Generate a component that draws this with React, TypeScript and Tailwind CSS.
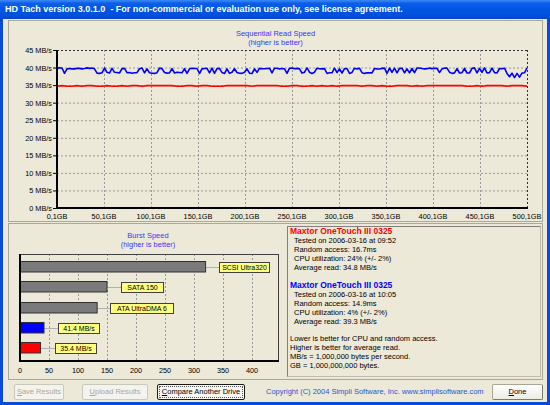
import React from "react";

const font = "font-['Liberation_Sans','Arial',sans-serif]";

// sequential read chart geometry (svg coords)
const X0 = 48;
const X1 = 518;
const Y_TOP = 3;
const Y_BOT = 161;
const yOf = (mb: number) => Y_BOT - (mb * (Y_BOT - Y_TOP)) / 45;
const xOf = (gb: number) => X0 + (gb * (X1 - X0)) / 500;

let seed = 4590;
const rnd = () => {
  seed = (seed * 9301 + 49297) % 233280;
  return seed / 233280;
};

const bluePoints: string[] = [];
for (let x = X0; x <= X1; x += 2.5) {
  let mb = 39.9 - rnd() * 0.3;
  if (rnd() < 0.42) mb = 38.7 - rnd() * 0.4;
  if (x > 500 && rnd() < 0.5) mb = 37.6 - rnd() * 0.6;
  bluePoints.push(`${x.toFixed(1)},${yOf(mb).toFixed(1)}`);
}

const redPoints: string[] = [];
for (let x = X0; x <= X1; x += 5) {
  const mb = 34.85 - (rnd() < 0.3 ? 0.2 : 0);
  redPoints.push(`${x},${yOf(mb).toFixed(1)}`);
}

const SequentialChart = () => (
  <svg width={533} height={174} className="block">
    {/* horizontal grid */}
    {[5, 10, 15, 20, 25, 30, 35, 40].map((mb) => (
      <line
        key={mb}
        x1={X0}
        x2={X1}
        y1={yOf(mb) + 0.5}
        y2={yOf(mb) + 0.5}
        stroke="#9a9a9a"
        strokeDasharray="2 2"
      />
    ))}
    {/* vertical grid */}
    {[50, 100, 150, 200, 250, 300, 350, 400, 450].map((gb) => (
      <line
        key={gb}
        x1={xOf(gb) + 0.5}
        x2={xOf(gb) + 0.5}
        y1={Y_TOP}
        y2={Y_BOT}
        stroke="#9a9a9a"
        strokeDasharray="2 2"
      />
    ))}
    <line x1={X0} x2={X1} y1={Y_TOP + 0.5} y2={Y_TOP + 0.5} stroke="#303030" strokeDasharray="2 2" />
    <line x1={X1 + 0.5} x2={X1 + 0.5} y1={Y_TOP} y2={Y_BOT} stroke="#303030" strokeDasharray="2 2" />
    {/* y labels + ticks */}
    {[0, 5, 10, 15, 20, 25, 30, 35, 40, 45].map((mb) => (
      <g key={mb}>
        <line x1={44} x2={X0} y1={yOf(mb) + 0.5} y2={yOf(mb) + 0.5} stroke="#000" />
        <text
          x={43}
          y={yOf(mb) + 3}
          textAnchor="end"
          fontSize="7.3"
          fontFamily="Liberation Sans, Arial, sans-serif"
          fill="#000"
        >
          {mb} MB/s
        </text>
      </g>
    ))}
    {/* x labels */}
    {[0, 50, 100, 150, 200, 250, 300, 350, 400, 450, 500].map((gb) => (
      <text
        key={gb}
        x={xOf(gb)}
        y={171.5}
        textAnchor="middle"
        fontSize="7.3"
        fontFamily="Liberation Sans, Arial, sans-serif"
        fill="#000"
      >
        {gb},1GB
      </text>
    ))}
    <polyline points={redPoints.join(" ")} fill="none" stroke="#ff0000" strokeWidth={1.6} />
    <polyline points={bluePoints.join(" ")} fill="none" stroke="#0000ff" strokeWidth={1.6} strokeLinejoin="round" />
    {/* axes */}
    <line x1={X0} x2={X0} y1={Y_TOP} y2={Y_BOT + 1} stroke="#000" strokeWidth={2} />
    <line x1={X0 - 1} x2={X1 + 1} y1={Y_BOT} y2={Y_BOT} stroke="#000" strokeWidth={2} />
  </svg>
);

// burst chart geometry
const B0 = 11;
const B1 = 269;
const B_TOP = 5;
const B_BOT = 112;
const bx = (mb: number) => B0 + mb * 0.58;

type Bar = { value: number; y: number; fill: string; label: string; lx: number; lw: number };

const bars: Bar[] = [
  { value: 320, y: 12, fill: "#7a7a7a", label: "SCSI Ultra320", lx: 210, lw: 50 },
  { value: 150, y: 32, fill: "#7a7a7a", label: "SATA 150", lx: 112, lw: 42 },
  { value: 133, y: 53, fill: "#7a7a7a", label: "ATA UltraDMA 6", lx: 101, lw: 63 },
  { value: 41.4, y: 73, fill: "#0000ff", label: "41.4 MB/s", lx: 49, lw: 41 },
  { value: 35.4, y: 93, fill: "#ff0000", label: "35.4 MB/s", lx: 46, lw: 41 },
];

const BurstChart = () => (
  <svg width={278} height={130} className="block">
    {[50, 100, 150, 200, 250, 300, 350, 400].map((mb) => (
      <line
        key={mb}
        x1={bx(mb) + 0.5}
        x2={bx(mb) + 0.5}
        y1={B_TOP}
        y2={B_BOT}
        stroke="#9a9a9a"
        strokeDasharray="2 2"
      />
    ))}
    <line x1={B0} x2={B1} y1={B_TOP + 0.5} y2={B_TOP + 0.5} stroke="#404040" />
    <line x1={B1 + 0.5} x2={B1 + 0.5} y1={B_TOP} y2={B_BOT} stroke="#404040" />
    {bars.map((b) => (
      <g key={b.label}>
        <line
          x1={bx(b.value)}
          x2={b.lx}
          y1={b.y + 6.5}
          y2={b.y + 6.5}
          stroke="#b0b0b0"
        />
        <rect
          x={B0}
          y={b.y + 0.5}
          width={bx(b.value) - B0}
          height={10.5}
          fill={b.fill}
          stroke="#303030"
          strokeWidth={1}
        />
        <rect x={b.lx + 0.5} y={b.y + 1.5} width={b.lw} height={10} fill="#ffff80" stroke="#404040" />
        <text
          x={b.lx + 0.5 + b.lw / 2}
          y={b.y + 9.2}
          textAnchor="middle"
          fontSize="7"
          fontFamily="Liberation Sans, Arial, sans-serif"
          fill="#000"
        >
          {b.label}
        </text>
      </g>
    ))}
    <line x1={B0} x2={B0} y1={B_TOP} y2={B_BOT + 1} stroke="#000" strokeWidth={2} />
    <line x1={B0 - 1} x2={B1 + 1} y1={B_BOT} y2={B_BOT} stroke="#000" strokeWidth={2} />
    {[0, 50, 100, 150, 200, 250, 300, 350, 400].map((mb) => (
      <text
        key={mb}
        x={bx(mb)}
        y={123.5}
        textAnchor="middle"
        fontSize="7.3"
        fontFamily="Liberation Sans, Arial, sans-serif"
        fill="#000"
      >
        {mb}
      </text>
    ))}
  </svg>
);

type DriveResult = {
  color: string;
  tested: string;
  random: string;
  cpu: string;
  average: string;
};

const results: DriveResult[] = [
  { color: "text-[#ff0000]", tested: "2006-03-16 at 09:52", random: "16.7ms", cpu: "24% (+/- 2%)", average: "34.8 MB/s" },
  { color: "text-[#0000ff]", tested: "2006-03-16 at 10:05", random: "14.9ms", cpu: "4% (+/- 2%)", average: "39.3 MB/s" },
];

const XpButton = ({
  children,
  width,
  disabled,
  focused,
}: {
  children: React.ReactNode;
  width: string;
  disabled?: boolean;
  focused?: boolean;
}) => {
  if (disabled) {
    return (
      <div className={`${width} h-[16px] flex items-center justify-center rounded-[2px] border border-[#cac8bb] bg-[#f4f3ee] text-[#aca899] text-[7.5px]`}>
        {children}
      </div>
    );
  }
  if (focused) {
    return (
      <div className={`${width} h-[16px] flex items-center justify-center rounded-[2px] border border-[#1a1a1a] bg-[#f7f6f1] p-[1px]`}>
        <div className="w-full h-full flex items-center justify-center border border-dotted border-[#555] text-[7.5px] text-black">
          {children}
        </div>
      </div>
    );
  }
  return (
    <div className={`${width} h-[16px] flex items-center justify-center rounded-[2px] border border-[#a9a696] border-r-[#7d7a6d] border-b-[#7d7a6d] bg-[linear-gradient(to_bottom,#ffffff,#ecebe4)] text-[7.5px] text-black`}>
      {children}
    </div>
  );
};

export default function App() {
  return (
    <div className={`w-[550px] h-[405px] bg-[#0b4ad8] flex flex-col overflow-hidden ${font}`}>
      <div className="h-[19px] shrink-0 flex items-center pl-[5px] bg-[linear-gradient(to_bottom,#3d8af5_0%,#0a5ee9_18%,#0054e3_55%,#004fd8_85%,#0a45c4_100%)]">
        <span className="text-white font-bold text-[9px] leading-none whitespace-nowrap">
          HD Tach version 3.0.1.0&nbsp;&nbsp;- For non-commercial or evaluation use only, see license agreement.
        </span>
      </div>

      <div className="flex-1 mx-[3px] mb-[3px] bg-[#ece9d8] flex flex-col pl-[5px] pr-[4px] pt-[1px]">
        {/* sequential read panel */}
        <div className="h-[202px] shrink-0 border border-[#aca899] flex flex-col">
          <div className="pt-[8px] flex flex-col items-center text-[7.5px] leading-[9px] text-[#3838f8]">
            <span>Sequential Read Speed</span>
            <span>(higher is better)</span>
          </div>
          <SequentialChart />
        </div>

        {/* burst + results panel */}
        <div className="h-[157px] mt-[1px] shrink-0 border border-[#aca899] flex">
          <div className="w-[278px] shrink-0 flex flex-col pt-[7px]">
            <div className="flex flex-col items-center text-[7.5px] leading-[9px] text-[#3838f8]">
              <span>Burst Speed</span>
              <span>(higher is better)</span>
            </div>
            <BurstChart />
          </div>
          <div className="flex-1 mt-[2px] mb-[2px] mr-[1px] border border-[#c0bdb0] border-l-[#808080] border-t-[#808080] pl-[2px] text-[7.5px] leading-[9px] text-black">
            {results.map((r, i) => (
              <div key={i} className="mb-[8.5px]">
                <div className={`${r.color} font-bold text-[8.5px] leading-[9px]`}>Maxtor OneTouch III 0325</div>
                <div className="pl-[4px]">
                  <div>Tested on {r.tested}</div>
                  <div>Random access: {r.random}</div>
                  <div>CPU utilization: {r.cpu}</div>
                  <div>Average read: {r.average}</div>
                </div>
              </div>
            ))}
            <div>
              <div>Lower is better for CPU and random access.</div>
              <div>Higher is better for average read.</div>
              <div>MB/s = 1,000,000 bytes per second.</div>
              <div>GB = 1,000,000,000 bytes.</div>
            </div>
          </div>
        </div>

        {/* buttons */}
        <div className="h-[16px] mt-[4px] shrink-0 flex items-center pl-[6px]">
          <XpButton width="w-[50px]" disabled>
            <span><span className="underline">S</span>ave Results</span>
          </XpButton>
          <div className="ml-[18px]">
            <XpButton width="w-[66px]" disabled>
              <span><span className="underline">U</span>pload Results</span>
            </XpButton>
          </div>
          <div className="ml-[9px]">
            <XpButton width="w-[88px]" focused>
              <span><span className="underline">C</span>ompare Another Drive</span>
            </XpButton>
          </div>
          <span className="ml-[21px] text-[7.5px] text-[#2b54d0] whitespace-nowrap">
            Copyright (C) 2004 Simpli Software, Inc. www.simplisoftware.com
          </span>
          <div className="ml-auto">
            <XpButton width="w-[51px]">
              <span><span className="underline">D</span>one</span>
            </XpButton>
          </div>
        </div>
      </div>
    </div>
  );
}
